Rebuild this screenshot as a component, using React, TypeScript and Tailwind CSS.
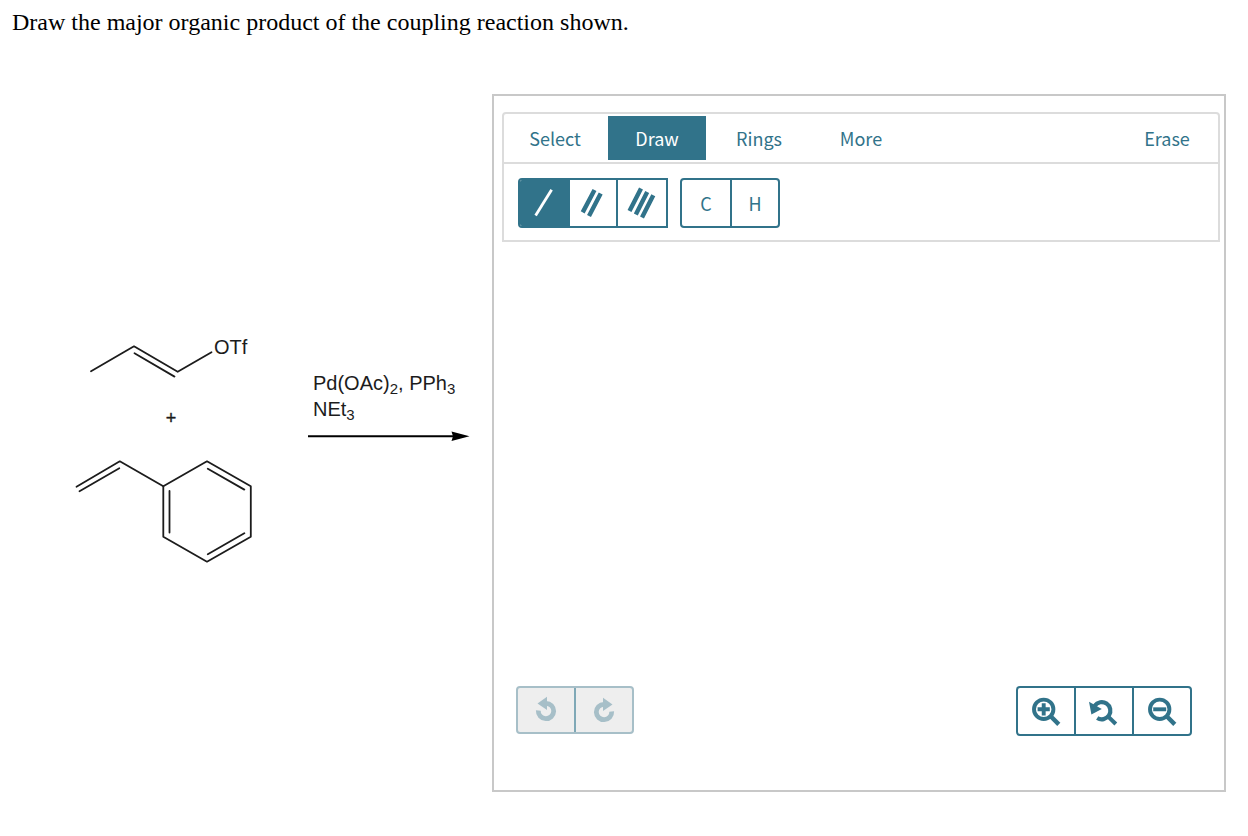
import { useState, type ReactNode } from 'react'

function cx(...parts: (string | false | undefined)[]): string {
  return parts.filter(Boolean).join(' ')
}

const TABS = ['Select', 'Draw', 'Rings', 'More'] as const
type Tab = (typeof TABS)[number]

type Tool = 'single' | 'double' | 'triple' | 'C' | 'H'

function Sub({ children }: { children: ReactNode }) {
  return <sub className="-bottom-1 text-[15px]">{children}</sub>
}

/** The two starting materials: propenyl triflate over styrene. */
function Reactants() {
  return (
    <svg
      viewBox="68 320 192 246"
      role="img"
      aria-label="Propenyl triflate plus styrene"
      className="h-[246px] w-48 shrink-0"
      fill="none"
      stroke="#1c1c1c"
      strokeWidth={1.8}
      strokeLinecap="round"
      strokeLinejoin="round"
    >
      <path d="M91 371.3 134 346.3 177.7 371.8 211.5 352.2M134.5 353.3 174.5 376.6" />
      <path d="M76.5 486.7 119.8 461.3 163.3 486.3M79.5 491.3 119.3 468.3" />
      <path d="M163.3 486.3 207 461.3 250.8 486.3V536.7L207 561.7 163.3 536.7Z" />
      <path d="M169.5 491V532.5M207.8 468.7 244.3 489.6M207.8 554.3 244.3 533.3" />
      <g className="font-['Liberation_Sans',sans-serif]" fill="#1c1c1c" stroke="none">
        <text x="214" y="354" fontSize="20">OTf</text>
        <text x="171" y="424" fontSize="18" textAnchor="middle" stroke="#1c1c1c" strokeWidth={0.4}>+</text>
      </g>
    </svg>
  )
}

function Conditions() {
  return (
    <div className="mt-[50px] font-['Liberation_Sans',sans-serif] text-[20px] leading-[26px] text-[#1c1c1c]">
      <p className="pl-[5px] whitespace-nowrap">
        Pd(OAc)<Sub>2</Sub>, PPh<Sub>3</Sub>
      </p>
      <p className="pl-[5px]">
        NEt<Sub>3</Sub>
      </p>
      <svg viewBox="0 0 162 12" className="mt-2 h-3 w-[162px]" aria-hidden="true">
        <path d="M0 6.3H148" stroke="#000" strokeWidth={2} />
        <path d="M143.5 1.5 161.5 6.3 143.5 11 145 6.3Z" fill="#000" />
      </svg>
    </div>
  )
}

function SingleBond() {
  return (
    <svg viewBox="0 0 48 46" className="h-[46px] w-12" stroke="currentColor" strokeWidth={2.8} aria-hidden="true">
      <path d="M15.6 35.4 31.6 9.8" />
    </svg>
  )
}

function DoubleBond() {
  return (
    <svg viewBox="0 0 46 46" className="h-[46px] w-[46px]" stroke="currentColor" strokeWidth={4.4} aria-hidden="true">
      <path d="M12.7 32.4 24.5 10M19 36 30.7 13.4" />
    </svg>
  )
}

function TripleBond() {
  return (
    <svg viewBox="0 0 48 46" className="h-[46px] w-12" stroke="currentColor" strokeWidth={4.4} aria-hidden="true">
      <path d="M11.5 31 23 8.6M17.8 34.5 29.2 12M24 37.6 35.3 15.2" />
    </svg>
  )
}

function UndoIcon() {
  return (
    <svg viewBox="-14 -15 28 28" className="size-7" aria-hidden="true">
      <path d="M-7.7 -.5A7.7 7.7 0 1 0 0-7.7" fill="none" stroke="currentColor" strokeWidth={4.8} />
      <path d="M1-14.3V-1L-8.5-7.4Z" fill="currentColor" />
    </svg>
  )
}

function RedoIcon() {
  return (
    <svg viewBox="-14 -16 28 28" className="size-7" aria-hidden="true">
      <path d="M7.7 -.5A7.7 7.7 0 1 1 0-7.7" fill="none" stroke="currentColor" strokeWidth={4.8} />
      <path d="M-1-14.3V-1L8.5-7.4Z" fill="currentColor" />
    </svg>
  )
}

function ZoomIcon({ plus = false }: { plus?: boolean }) {
  return (
    <svg viewBox="-16 -16 32 32" className="size-8" fill="none" stroke="currentColor" aria-hidden="true">
      <circle cx="-2.3" cy="-1.7" r="9.7" strokeWidth={3.9} />
      <path d="M4.2 4.8 12.8 13.4" strokeWidth={4.4} />
      <path d={plus ? 'M-8.4-1.7H3.8M-2.3-7.8V4.4' : 'M-8.8-1.7H4.2'} strokeWidth={3.9} />
    </svg>
  )
}

function ZoomResetIcon() {
  return (
    <svg viewBox="-16 -16 32 32" className="size-8" fill="none" stroke="currentColor" aria-hidden="true">
      <path d="M-9.3-5.2A8.6 8.6 0 1 1-6.8 7" strokeWidth={4.2} />
      <path d="M4.2 5.6 11.8 13" strokeWidth={4} />
      <path d="M-15-9.2-12.6 3.4-2.2-2Z" fill="currentColor" stroke="none" />
    </svg>
  )
}

interface ToolButtonProps {
  label: string
  pressed: boolean
  onPress: () => void
  className?: string
  children: ReactNode
}

function ToolButton({ label, pressed, onPress, className, children }: ToolButtonProps) {
  return (
    <button
      type="button"
      aria-label={label}
      aria-pressed={pressed}
      onClick={onPress}
      className={cx('flex h-full items-center justify-center', pressed && 'bg-[#31738a] text-white', className)}
    >
      {children}
    </button>
  )
}

function Editor() {
  const [tab, setTab] = useState<Tab>('Draw')
  const [tool, setTool] = useState<Tool>('single')

  return (
    <section
      aria-label="Structure editor"
      className="flex min-w-0 flex-1 flex-col border-2 border-[#c8c8c8] pt-4 pr-1 pb-[54px] pl-2 font-['Noto_Sans_CJK_JP',sans-serif] text-[#31738a]"
    >
      <div className="rounded-t border-2 border-[#dcdcdc]">
        <div role="tablist" className="flex gap-1 border-b-2 border-[#dcdcdc] p-0.5 text-[18px]">
          {TABS.map((t) => (
            <button
              key={t}
              type="button"
              role="tab"
              aria-selected={t === tab}
              onClick={() => setTab(t)}
              className={cx('h-11 w-[98px]', t === tab && 'bg-[#31738a] text-white')}
            >
              {t}
            </button>
          ))}
          <button type="button" className="ml-auto h-11 w-[98px]">
            Erase
          </button>
        </div>
        <div className="flex gap-3 px-3.5 pt-3.5 pb-3">
          <div className="flex h-[50px] divide-x-2 divide-[#31738a] overflow-hidden rounded-l border-2 border-[#31738a]">
            <ToolButton label="Single bond" pressed={tool === 'single'} onPress={() => setTool('single')}>
              <SingleBond />
            </ToolButton>
            <ToolButton label="Double bond" pressed={tool === 'double'} onPress={() => setTool('double')}>
              <DoubleBond />
            </ToolButton>
            <ToolButton label="Triple bond" pressed={tool === 'triple'} onPress={() => setTool('triple')}>
              <TripleBond />
            </ToolButton>
          </div>
          <div className="flex h-[50px] divide-x-2 divide-[#31738a] overflow-hidden rounded border-2 border-[#31738a] text-[18px]">
            <ToolButton label="C" pressed={tool === 'C'} onPress={() => setTool('C')} className="w-[50px]">
              C
            </ToolButton>
            <ToolButton label="H" pressed={tool === 'H'} onPress={() => setTool('H')} className="w-[46px]">
              H
            </ToolButton>
          </div>
        </div>
      </div>

      {/* Empty drawing surface */}
      <div className="h-[444px]" />

      <div className="flex items-start justify-between pr-7 pl-3.5">
        <div className="flex h-12 divide-x-2 divide-[#7fa8b6] rounded border-2 border-[#a7bfc8] bg-[#eeeeee] text-[#a7bfc8]">
          <button type="button" disabled aria-label="Undo" className="flex w-[58px] items-center justify-center">
            <UndoIcon />
          </button>
          <button type="button" disabled aria-label="Redo" className="flex w-14 items-center justify-center">
            <RedoIcon />
          </button>
        </div>
        <div className="flex h-[50px] divide-x-2 divide-[#31738a] rounded border-2 border-[#31738a]">
          <button type="button" aria-label="Zoom in" className="flex w-[58px] items-center justify-center">
            <ZoomIcon plus />
          </button>
          <button type="button" aria-label="Reset zoom" className="flex w-[58px] items-center justify-center">
            <ZoomResetIcon />
          </button>
          <button type="button" aria-label="Zoom out" className="flex w-14 items-center justify-center">
            <ZoomIcon />
          </button>
        </div>
      </div>
    </section>
  )
}

export default function App() {
  return (
    <main className="min-h-screen bg-white pt-[7px] pb-11">
      <h1 className="px-3 font-['Liberation_Serif',serif] text-[24px] leading-[30px] text-black">
        Draw the major organic product of the coupling reaction shown.
      </h1>
      <div className="mt-[57px] flex items-center gap-[22px] pr-[22px] pl-[68px]">
        <div className="flex shrink-0 items-start gap-12">
          <Reactants />
          <Conditions />
        </div>
        <Editor />
      </div>
    </main>
  )
}
